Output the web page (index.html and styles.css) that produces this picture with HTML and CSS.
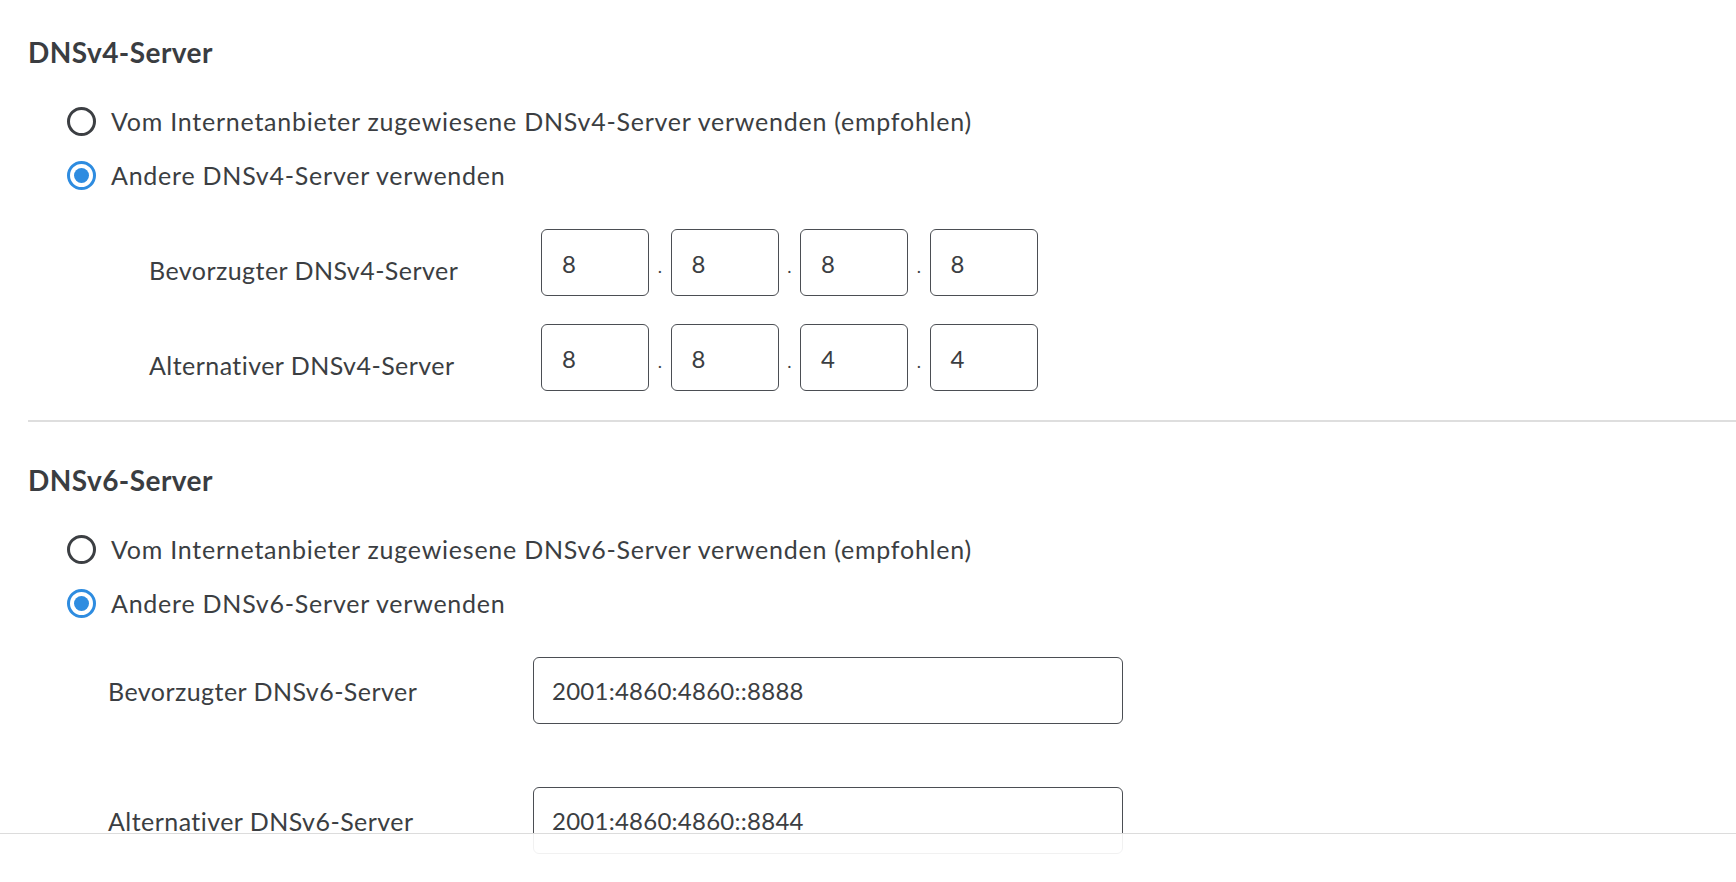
FILE: index.html
```html
<!DOCTYPE html>
<html lang="de">
<head>
<meta charset="utf-8">
<title>DNS-Server</title>
<link rel="stylesheet" href="styles.css">
</head>
<body>
<main class="page">
  <section class="block block-v4">
    <h2 class="block-title">DNSv4-Server</h2>
    <div class="radio-list">
      <label class="radio">
        <span class="radio-mark"></span>
        <span class="radio-text">Vom Internetanbieter zugewiesene DNSv4-Server verwenden (empfohlen)</span>
      </label>
      <label class="radio">
        <span class="radio-mark is-checked"></span>
        <span class="radio-text">Andere DNSv4-Server verwenden</span>
      </label>
    </div>
    <div class="ip-rows">
      <div class="ip-row">
        <span class="ip-label">Bevorzugter DNSv4-Server</span>
        <div class="octets">
          <span class="octet">8</span><span class="octet-dot">.</span>
          <span class="octet">8</span><span class="octet-dot">.</span>
          <span class="octet">8</span><span class="octet-dot">.</span>
          <span class="octet">8</span>
        </div>
      </div>
      <div class="ip-row">
        <span class="ip-label">Alternativer DNSv4-Server</span>
        <div class="octets">
          <span class="octet">8</span><span class="octet-dot">.</span>
          <span class="octet">8</span><span class="octet-dot">.</span>
          <span class="octet">4</span><span class="octet-dot">.</span>
          <span class="octet">4</span>
        </div>
      </div>
    </div>
  </section>

  <section class="block block-v6">
    <h2 class="block-title">DNSv6-Server</h2>
    <div class="radio-list">
      <label class="radio">
        <span class="radio-mark"></span>
        <span class="radio-text">Vom Internetanbieter zugewiesene DNSv6-Server verwenden (empfohlen)</span>
      </label>
      <label class="radio">
        <span class="radio-mark is-checked"></span>
        <span class="radio-text">Andere DNSv6-Server verwenden</span>
      </label>
    </div>
    <div class="v6-rows">
      <div class="v6-row">
        <span class="v6-label">Bevorzugter DNSv6-Server</span>
        <span class="v6-input">2001:4860:4860::8888</span>
      </div>
      <div class="v6-row">
        <span class="v6-label">Alternativer DNSv6-Server</span>
        <span class="v6-input">2001:4860:4860::8844</span>
      </div>
    </div>
  </section>
</main>
<footer class="action-bar"></footer>
</body>
</html>
```

FILE: styles.css
```css
html, body {
  margin: 0;
  padding: 0;
  background: #ffffff;
}

body {
  font-family: Lato, "Noto Sans", sans-serif;
  font-size: 25px;
  color: #3b3e42;
  overflow: hidden;
}

.page {
  display: flex;
  flex-direction: column;
}

.block {
  margin-left: 28px;
  display: flex;
  flex-direction: column;
}

.block-v4 {
  padding-top: 34px;
  padding-bottom: 29px;
  border-bottom: 2px solid #dedede;
}

.block-v6 {
  padding-top: 40px;
}

.block-title {
  margin: 0;
  height: 36px;
  line-height: 36px;
  font-size: 28px;
  font-weight: 700;
  letter-spacing: 0.45px;
  color: #3a3d41;
}

.radio-list {
  display: flex;
  flex-direction: column;
  padding-left: 39px;
  margin-top: 24px;
}

.radio {
  display: flex;
  align-items: center;
  gap: 15px;
  height: 54px;
}

.radio-mark {
  box-sizing: border-box;
  width: 29px;
  height: 29px;
  border: 3px solid #3c3f43;
  border-radius: 50%;
  display: flex;
  align-items: center;
  justify-content: center;
  flex: none;
}

.radio-mark.is-checked {
  border-color: #2e8ce0;
}

.radio-mark.is-checked::after {
  content: "";
  width: 15px;
  height: 15px;
  border-radius: 50%;
  background: #2e8ce0;
}

.radio-text {
  line-height: 30px;
  letter-spacing: 0.76px;
}

/* IPv4 octet rows */
.ip-rows {
  display: flex;
  flex-direction: column;
  gap: 28px;
  margin-top: 27px;
}

.ip-row {
  display: flex;
  align-items: center;
  height: 67px;
}

.ip-label {
  width: 392px;
  padding-left: 121px;
  padding-top: 15px;
  box-sizing: content-box;
  letter-spacing: 0.45px;
}

.octets {
  display: flex;
  align-items: center;
}

.octet {
  box-sizing: border-box;
  width: 108px;
  height: 67px;
  border: 1px solid #4b4e53;
  border-radius: 6px;
  padding-left: 20px;
  padding-top: 2px;
  display: flex;
  align-items: center;
  font-size: 24px;
}

.octet-dot {
  width: 21.5px;
  text-align: center;
  font-size: 18px;
  padding-top: 6px;
}

/* IPv6 rows */
.v6-rows {
  display: flex;
  flex-direction: column;
  gap: 63px;
  margin-top: 27px;
}

.v6-row {
  display: flex;
  align-items: center;
}

.v6-label {
  width: 425px;
  padding-left: 80px;
  box-sizing: content-box;
  letter-spacing: 0.45px;
}

.v6-input {
  box-sizing: border-box;
  width: 590px;
  height: 67px;
  border: 1px solid #4b4e53;
  border-radius: 6px;
  padding-left: 18px;
  display: flex;
  align-items: center;
  font-size: 24px;
  letter-spacing: 0.25px;
}

/* bottom bar laid over the scrolled form */
.action-bar {
  position: fixed;
  left: 0;
  right: 0;
  bottom: 0;
  height: 48px;
  border-top: 1px solid #dcdcdc;
  background: rgba(255, 255, 255, 0.92);
}
```
